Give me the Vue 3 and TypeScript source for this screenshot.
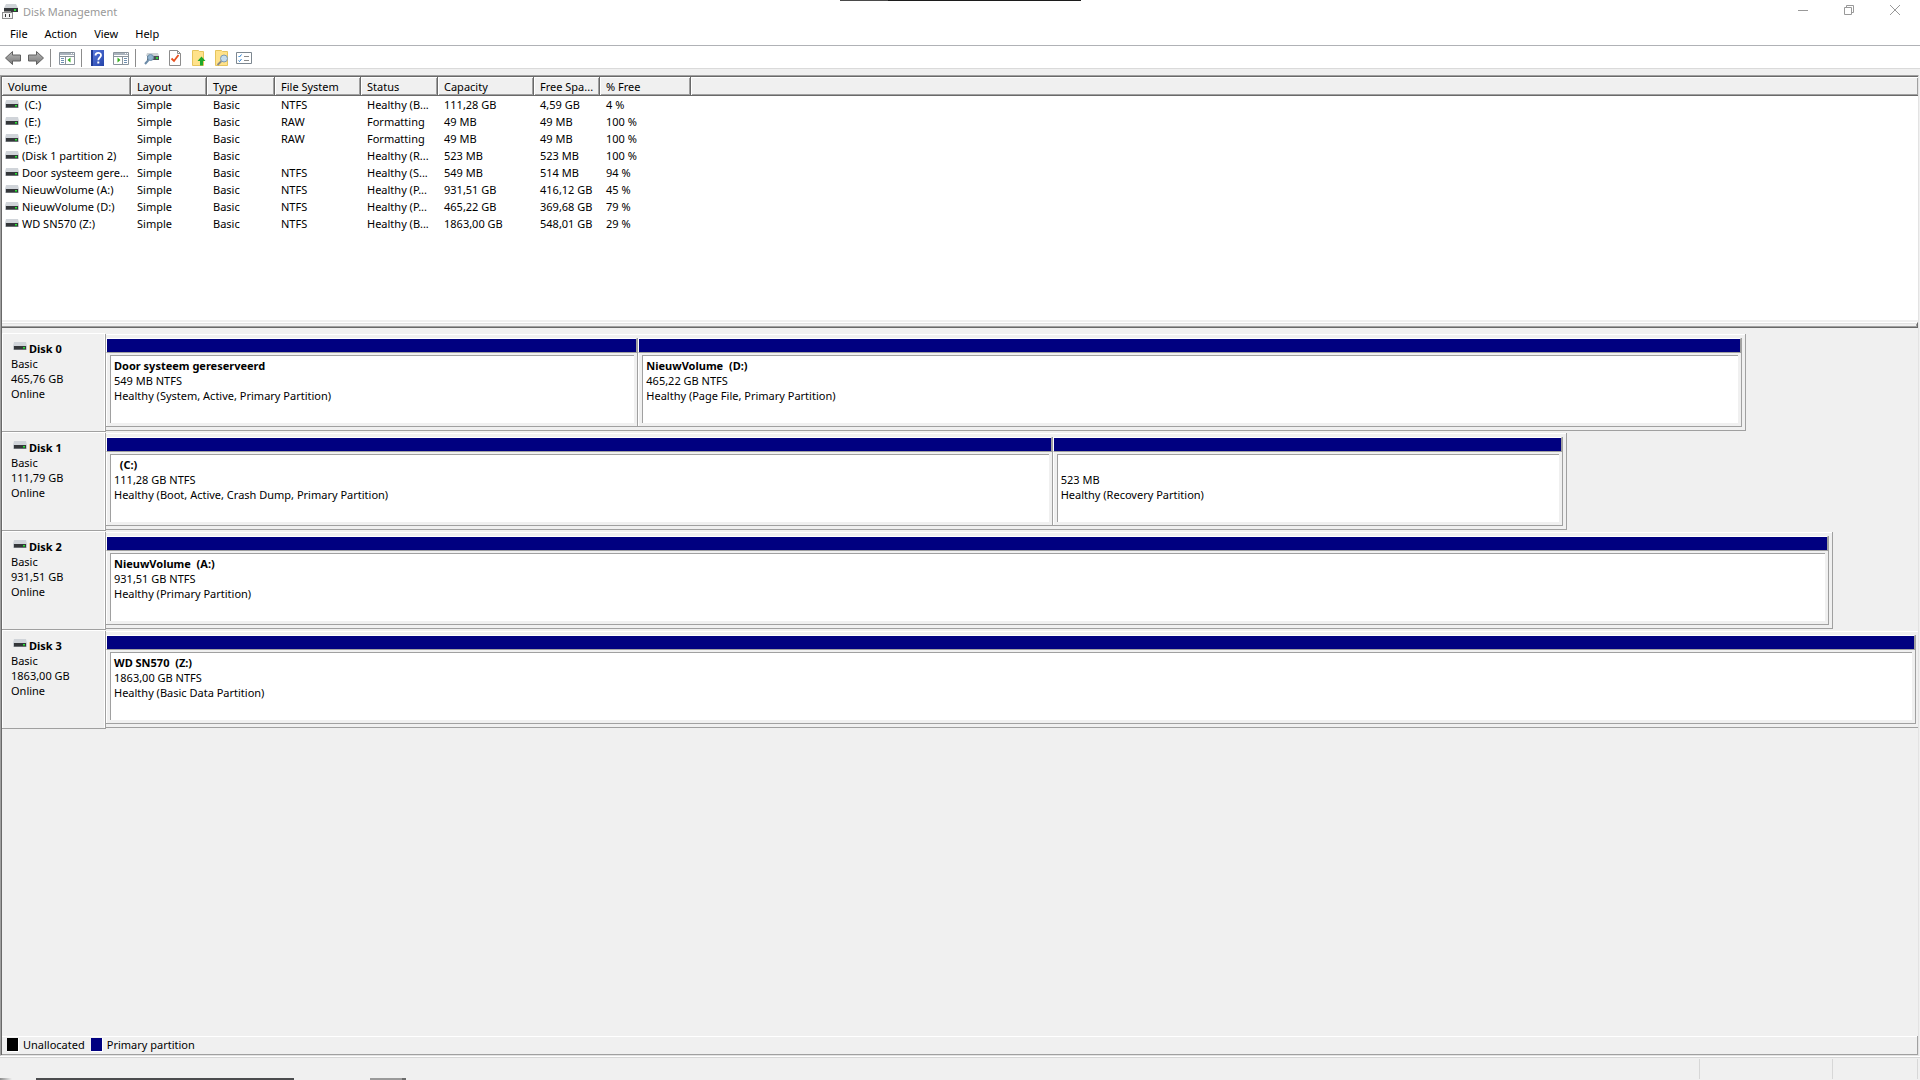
<script setup lang="ts">
interface Column {
  label: string
  width?: number
}

interface Partition {
  name: string
  size: string
  status: string
  weight: number
}

interface Disk {
  name: string
  size: string
  share: number
  partitions: Partition[]
}

const menus: string[] = ['File', 'Action', 'View', 'Help']

const columns: Column[] = [
  { label: 'Volume', width: 129 },
  { label: 'Layout', width: 76 },
  { label: 'Type', width: 68 },
  { label: 'File System', width: 86 },
  { label: 'Status', width: 77 },
  { label: 'Capacity', width: 96 },
  { label: 'Free Spa...', width: 66 },
  { label: '% Free', width: 91 },
  { label: '' },
]

const volumes: string[][] = [
  ['\u00a0(C:)', 'Simple', 'Basic', 'NTFS', 'Healthy (B...', '111,28 GB', '4,59 GB', '4 %'],
  ['\u00a0(E:)', 'Simple', 'Basic', 'RAW', 'Formatting', '49 MB', '49 MB', '100 %'],
  ['\u00a0(E:)', 'Simple', 'Basic', 'RAW', 'Formatting', '49 MB', '49 MB', '100 %'],
  ['(Disk 1 partition 2)', 'Simple', 'Basic', '', 'Healthy (R...', '523 MB', '523 MB', '100 %'],
  ['Door systeem gere...', 'Simple', 'Basic', 'NTFS', 'Healthy (S...', '549 MB', '514 MB', '94 %'],
  ['NieuwVolume (A:)', 'Simple', 'Basic', 'NTFS', 'Healthy (P...', '931,51 GB', '416,12 GB', '45 %'],
  ['NieuwVolume (D:)', 'Simple', 'Basic', 'NTFS', 'Healthy (P...', '465,22 GB', '369,68 GB', '79 %'],
  ['WD SN570 (Z:)', 'Simple', 'Basic', 'NTFS', 'Healthy (B...', '1863,00 GB', '548,01 GB', '29 %'],
]

const disks: Disk[] = [
  {
    name: 'Disk 0',
    size: '465,76 GB',
    share: 90.5,
    partitions: [
      { name: 'Door systeem gereserveerd', size: '549 MB NTFS', status: 'Healthy (System, Active, Primary Partition)', weight: 532 },
      { name: 'NieuwVolume  (D:)', size: '465,22 GB NTFS', status: 'Healthy (Page File, Primary Partition)', weight: 1104 },
    ],
  },
  {
    name: 'Disk 1',
    size: '111,79 GB',
    share: 80.63,
    partitions: [
      { name: '  (C:)', size: '111,28 GB NTFS', status: 'Healthy (Boot, Active, Crash Dump, Primary Partition)', weight: 947 },
      { name: ' ', size: '523 MB', status: 'Healthy (Recovery Partition)', weight: 510 },
    ],
  },
  {
    name: 'Disk 2',
    size: '931,51 GB',
    share: 95.3,
    partitions: [{ name: 'NieuwVolume  (A:)', size: '931,51 GB NTFS', status: 'Healthy (Primary Partition)', weight: 1 }],
  },
  {
    name: 'Disk 3',
    size: '1863,00 GB',
    share: 100,
    partitions: [{ name: 'WD SN570  (Z:)', size: '1863,00 GB NTFS', status: 'Healthy (Basic Data Partition)', weight: 1 }],
  },
]
</script>

<template>
  <div class="window">
    <svg class="defs" aria-hidden="true">
      <symbol id="drive" viewBox="0 0 14 8">
        <path d="M1 0h12l1 4v4H0V4z" fill="#d0d4d9" />
        <path d="M0 4h14v4H0z" fill="#c3c8cd" />
        <rect x="1" y="4" width="12" height="4" fill="#34373a" />
        <rect x="1" y="7" width="12" height="1" fill="#6a6e72" />
        <rect x="10" y="5" width="2" height="1" fill="#2fe03a" />
        <rect x="10" y="6" width="2" height="1" fill="#1b9c28" />
      </symbol>
      <linearGradient id="steel" x1="0" y1="0" x2="0" y2="1">
        <stop offset="0" stop-color="#b9b9b9" />
        <stop offset="1" stop-color="#777" />
      </linearGradient>
      <linearGradient id="book" x1="0" y1="0" x2="1" y2="1">
        <stop offset="0" stop-color="#5a7be0" />
        <stop offset="1" stop-color="#2443a8" />
      </linearGradient>
    </svg>

    <div class="edge edge-top"><i></i><b></b></div>

    <header class="titlebar">
      <svg class="app-icon" width="16" height="16" viewBox="0 0 16 16">
        <path d="M4 0h10l2 4H2z" fill="#cfd3d7" />
        <path d="M2 4h14v4H2z" fill="#34373a" />
        <rect x="12" y="5" width="2" height="2" fill="#2ed83a" />
        <path d="M0 8h11v7H0z" fill="#8d8d8d" />
        <path d="M1 9h9v5H1z" fill="#f4f4f4" />
        <path d="M2 7h7v2H2z" fill="#8d8d8d" />
        <rect x="3" y="10" width="1" height="3" fill="#333" />
        <rect x="7" y="10" width="1" height="3" fill="#333" />
      </svg>
      <span class="title">Disk Management</span>
      <div class="captions">
        <button type="button" aria-label="Minimize">
          <svg width="10" height="10" viewBox="0 0 10 10"><path d="M0 5.5h10" /></svg>
        </button>
        <button type="button" aria-label="Restore">
          <svg width="10" height="10" viewBox="0 0 10 10"><path d="M.5 2.5h7v7h-7zM2.5 2.5v-2h7v7h-2" /></svg>
        </button>
        <button type="button" aria-label="Close">
          <svg width="10" height="10" viewBox="0 0 10 10"><path d="M0 0l10 10M10 0L0 10" /></svg>
        </button>
      </div>
    </header>

    <nav class="menubar">
      <button v-for="menu in menus" :key="menu" type="button">{{ menu }}</button>
    </nav>

    <div class="toolbar">
      <button type="button" aria-label="Back">
        <svg viewBox="0 0 16 16"><path d="M.5 8L7.5 1.500v3.500h8v6h-8v3.500z" fill="url(#steel)" stroke="#606060" /></svg>
      </button>
      <button type="button" aria-label="Forward">
        <svg viewBox="0 0 16 16"><path d="M15.500 8L8.500 1.500v3.500h-8v6h8v3.500z" fill="url(#steel)" stroke="#606060" /></svg>
      </button>
      <span class="separator"></span>
      <button type="button" aria-label="Show console tree">
        <svg viewBox="0 0 16 16">
          <path d="M.5 2.500h15v12H.5z" fill="#fff" stroke="#8a939c" />
          <path d="M1 3h14v2H1z" fill="#aab3bd" />
          <path d="M12 3h1v1h-1zM14 3h1v1h-1z" fill="#fff" />
          <path d="M1 6.500h14" stroke="#8a939c" />
          <path d="M6.500 6v8" stroke="#8a939c" />
          <path d="M2 8.500h3M2 10.500h3M2 12.500h3" stroke="#6f8fb0" />
          <path d="M11.500 7.500v5L8.500 10z" fill="#35b01c" />
        </svg>
      </button>
      <span class="separator"></span>
      <button type="button" aria-label="Help topics">
        <svg viewBox="0 0 16 16">
          <path d="M1 0h13v16H1z" fill="url(#book)" />
          <path d="M1 0h2v16H1z" fill="#1f3a94" />
          <path d="M5.500 5.500C5.500 2 11 2 11 5.200c0 2.300-2.700 2.300-2.700 5" fill="none" stroke="#fff" stroke-width="1.800" />
          <path d="M7.300 11.500h2v2h-2z" fill="#fff" />
        </svg>
      </button>
      <button type="button" aria-label="Show action pane">
        <svg viewBox="0 0 16 16">
          <path d="M.5 2.500h15v12H.5z" fill="#fff" stroke="#8a939c" />
          <path d="M1 3h14v2H1z" fill="#aab3bd" />
          <path d="M12 3h1v1h-1zM14 3h1v1h-1z" fill="#fff" />
          <path d="M1 6.500h14" stroke="#8a939c" />
          <path d="M9.500 6v8" stroke="#8a939c" />
          <path d="M11 8.500h3M11 10.500h3M11 12.500h3" stroke="#6f8fb0" />
          <path d="M4.500 7.500v5l3-2.500z" fill="#35b01c" />
        </svg>
      </button>
      <span class="separator"></span>
      <button type="button" aria-label="Rescan disks">
        <svg viewBox="0 0 16 16">
          <path d="M3 3h11l1 3H2z" fill="#ccd1d5" />
          <path d="M3 6h12v4H3z" fill="#4b5054" />
          <path d="M12 7h2v2h-2z" fill="#2fd03a" />
          <circle cx="6.500" cy="7.500" r="3" fill="#8fb2cf" stroke="#6f8faa" />
          <path d="M4.500 10L1 14" stroke="#6c8ba8" stroke-width="2" />
        </svg>
      </button>
      <button type="button" aria-label="Check">
        <svg viewBox="0 0 16 16">
          <path d="M2.500.5h8l3 3v12h-11z" fill="#fff" stroke="#8c8c8c" />
          <path d="M10.500.5v3h3" fill="none" stroke="#8c8c8c" />
          <path d="M4.500 8.500L7 11l4.500-6" fill="none" stroke="#e8501e" stroke-width="1.800" />
        </svg>
      </button>
      <button type="button" aria-label="Open folder">
        <svg viewBox="0 0 16 16">
          <path d="M2.500.5h6l1 1h4v14h-11z" fill="#ffe28a" stroke="#e6c45c" />
          <path d="M11.500 6.500l4 4.500h-2.500v4.500h-3V11H7.500z" fill="#1fa82a" />
        </svg>
      </button>
      <button type="button" aria-label="Explore folder">
        <svg viewBox="0 0 16 16">
          <path d="M2.500.5h6l1 1h5v14h-12z" fill="#ffe28a" stroke="#e6c45c" />
          <path d="M8.500 11l-4 4" stroke="#8a8a8a" stroke-width="1.800" />
          <circle cx="11" cy="8.500" r="3.500" fill="#c3dcee" stroke="#7d99b0" />
        </svg>
      </button>
      <button type="button" aria-label="Properties">
        <svg viewBox="0 0 16 16">
          <path d="M.5 2.500h15v11H.5z" fill="#fff" stroke="#7d8790" />
          <path d="M2.500 6l1 1 2-2.500M2.500 10.500l1 1 2-2.500" fill="none" stroke="#2a7fd0" />
          <path d="M8 6.500h5M8 10.500h5" stroke="#8a8a8a" />
        </svg>
      </button>
    </div>

    <main class="workspace">
      <section class="volumes">
        <table>
          <colgroup>
            <col v-for="column in columns" :key="column.label" :style="column.width ? { width: column.width + 'px' } : {}" />
          </colgroup>
          <thead>
            <tr>
              <th v-for="column in columns" :key="column.label" scope="col">{{ column.label }}</th>
            </tr>
          </thead>
          <tbody>
            <tr v-for="(row, r) in volumes" :key="r">
              <td v-for="(cell, c) in row" :key="c">
                <div v-if="c === 0" class="volume-name">
                  <svg class="drive" aria-hidden="true"><use href="#drive" /></svg>
                  <span>{{ cell }}</span>
                </div>
                <template v-else>{{ cell }}</template>
              </td>
              <td></td>
            </tr>
          </tbody>
        </table>
      </section>

      <div class="splitter"></div>

      <section class="graph">
        <article v-for="disk in disks" :key="disk.name" class="disk">
          <div class="disk-label">
            <h2>
              <svg class="drive" aria-hidden="true"><use href="#drive" /></svg>
              <span>{{ disk.name }}</span>
            </h2>
            <p>Basic</p>
            <p>{{ disk.size }}</p>
            <p>Online</p>
          </div>
          <div class="disk-track">
            <div class="disk-area" :class="{ full: disk.share === 100 }" :style="{ width: disk.share + '%' }">
              <div v-for="part in disk.partitions" :key="part.size" class="partition" :style="{ flexGrow: part.weight }">
                <div class="stripe"></div>
                <div class="partition-body">
                  <div class="partition-info">
                    <h3>{{ part.name }}</h3>
                    <p>{{ part.size }}</p>
                    <p>{{ part.status }}</p>
                  </div>
                </div>
              </div>
            </div>
          </div>
        </article>
      </section>

      <footer class="legend">
        <span class="swatch unallocated"></span>
        <span class="legend-text">Unallocated</span>
        <span class="swatch primary"></span>
        <span class="legend-text">Primary partition</span>
      </footer>
    </main>

    <div class="statusbar">
      <span class="status-main"></span>
      <span class="status-mid"></span>
      <span class="status-end"></span>
    </div>

    <div class="edge edge-bottom"><i class="fade"></i><i class="long"></i><i class="short"></i><i class="tip"></i></div>
  </div>
</template>

<style>
body {
  margin: 0;
}
</style>

<style scoped>
.window {
  position: relative;
  display: flex;
  flex-direction: column;
  box-sizing: border-box;
  min-height: 100vh;
  background: #f0f0f0;
  color: #000;
  font: 11px/15px "Noto Sans", "Open Sans", sans-serif;
  white-space: pre;
}

.defs {
  position: absolute;
  width: 0;
  height: 0;
}

button {
  margin: 0;
  padding: 0;
  border: 0;
  background: none;
  color: inherit;
  font: inherit;
}

h2,
h3,
p {
  margin: 0;
  font-size: inherit;
}

.drive {
  display: block;
  flex: none;
  width: 14px;
  height: 8px;
}

.titlebar {
  display: flex;
  align-items: center;
  height: 23px;
  padding: 0 2px;
  background: #fff;
  color: #999;
}

.title {
  margin-left: 5px;
  padding-bottom: 1px;
}

.captions {
  display: flex;
  align-self: flex-start;
  margin-left: auto;
  height: 20px;
}

.captions button {
  display: flex;
  align-items: center;
  justify-content: center;
  width: 46px;
}

.captions svg {
  display: block;
  fill: none;
  stroke: #999;
}

.menubar {
  display: flex;
  gap: 1px;
  height: 22px;
  padding-left: 2px;
  background: #fff;
  border-bottom: 1px solid #b0b2b6;
}

.menubar button {
  padding: 0 8px 2px;
}

.toolbar {
  display: flex;
  align-items: center;
  height: 20px;
  padding: 2px 0 0 2px;
  background: #fff;
  border-bottom: 1px solid #dadada;
}

.toolbar button {
  width: 23px;
  padding-left: 3px;
}

.toolbar button svg {
  display: block;
  width: 16px;
  height: 16px;
}

.separator {
  width: 1px;
  height: 18px;
  margin: 0 5px 0 2px;
  background: #8c8c8c;
}

.workspace {
  display: flex;
  flex: 1;
  flex-direction: column;
  margin: 6px 1px 0 0;
  border: 1px solid;
  border-color: #a0a0a0 #e3e3e3 #e3e3e3 #a0a0a0;
  box-shadow: inset 1px 1px #696969;
  padding: 1px 0 0 1px;
}

.volumes {
  height: 243px;
  background: #fff;
}

table {
  width: 100%;
  table-layout: fixed;
  border-collapse: separate;
  border-spacing: 0;
}

th,
td {
  padding: 0 0 0 6px;
  overflow: hidden;
  font-weight: 400;
  text-align: left;
  vertical-align: middle;
}

th {
  box-sizing: border-box;
  height: 19px;
  background: #f0f0f0;
  border-bottom: 1px solid #696969;
  border-right: 1px solid #696969;
  box-shadow: inset 1px 1px #fff, inset -1px -1px #a0a0a0;
}

th:last-child {
  border-right: 0;
}

td {
  height: 17px;
}

td:first-child {
  padding-left: 3px;
}

.volume-name {
  display: flex;
  gap: 3px;
}

.volume-name .drive {
  margin-top: 3px;
}

.splitter {
  height: 3px;
  margin-top: 2px;
  border-top: 1px solid #fff;
  border-bottom: 1px solid #696969;
  border-right: 1px solid #696969;
  box-shadow: inset 0 1px #e3e3e3, inset -1px -1px #a0a0a0;
  padding-bottom: 1px;
}

.graph {
  flex: 1;
  padding-top: 5px;
}

.disk {
  display: flex;
  height: 99px;
}

.disk-label {
  box-sizing: border-box;
  width: 103px;
  height: 99px;
  padding: 8px 0 0 9px;
  border-bottom: 1px solid #a0a0a0;
  box-shadow: inset 1px 1px #fff, inset -1px 0 #fff;
}

.disk-label h2 {
  display: flex;
  padding-left: 2px;
  gap: 2px;
}

.disk-label .drive {
  margin-top: 1px;
}

.disk-track {
  flex: 1;
  min-width: 0;
  margin-top: 1px;
  border-left: 1px solid #a0a0a0;
}

.disk-area {
  display: flex;
  box-sizing: border-box;
  height: 97px;
  padding: 4px 3px 3px 0;
  border: solid #a0a0a0;
  border-width: 0 1px 1px 0;
  box-shadow: inset 0 1px #fff;
}

.disk-area.full {
  border-right: 0;
  padding-right: 2px;
}

.partition {
  flex: 1 1 0;
  box-sizing: border-box;
  min-width: 0;
  height: 89px;
  border: solid #a0a0a0;
  border-width: 0 1px 1px 0;
}

.stripe {
  height: 13px;
  background: #000080;
  border: 1px solid #a0a0a0;
  border-top-color: #fff;
  border-left-color: #fff;
}

.partition-body {
  padding: 2px 3px 3px;
  box-shadow: inset 1px 0 #fff;
}

.partition-info {
  box-sizing: border-box;
  height: 68px;
  margin-left: 1px;
  padding: 2px 0 0 3px;
  overflow: hidden;
  background: #fff;
  border: solid #a0a0a0;
  border-width: 1px 0 0 1px;
}

.partition-info h3 {
  height: 15px;
}

.legend {
  display: flex;
  align-items: center;
  height: 17px;
  padding: 0 0 1px 5px;
  border: solid #a0a0a0;
  border-width: 0 1px 1px 0;
  box-shadow: inset 0 1px #fff;
}

.swatch {
  width: 11px;
  height: 13px;
  border: solid #fff;
  border-width: 0 1px 1px 0;
}

.unallocated {
  background: #000;
}

.primary {
  background: #000080;
}

.legend-text {
  padding: 0 6px 0 4px;
}

.statusbar {
  display: flex;
  height: 20px;
  margin-top: 1px;
  padding: 1px 2px 1px 0;
  border-top: 1px solid #d7d7d7;
  box-shadow: 0 -1px #fff;
}

.statusbar span {
  box-sizing: border-box;
  border-right: 1px solid #d7d7d7;
}

.status-main {
  flex: 1;
}

.status-mid {
  width: 133px;
}

.status-end {
  width: 85px;
}

.edge {
  position: absolute;
  left: 0;
  display: flex;
  width: 100%;
}

.edge-top {
  top: 0;
  justify-content: center;
  height: 1px;
}

.edge-top i {
  width: 48px;
  background: #4a4a4a;
}

.edge-top b {
  width: 193px;
  background: #1c1c1c;
}

.edge-bottom {
  bottom: 0;
  height: 2px;
}

.fade {
  width: 12px;
  margin-right: 24px;
  background: linear-gradient(90deg, #8c8c8c, #f0f0f0);
}

.long {
  width: 258px;
  margin-right: 76px;
  background: #4b4c4e;
}

.short {
  width: 32px;
  background: #9a9a9a;
}

.tip {
  width: 4px;
  background: #6b6b6b;
}
</style>
